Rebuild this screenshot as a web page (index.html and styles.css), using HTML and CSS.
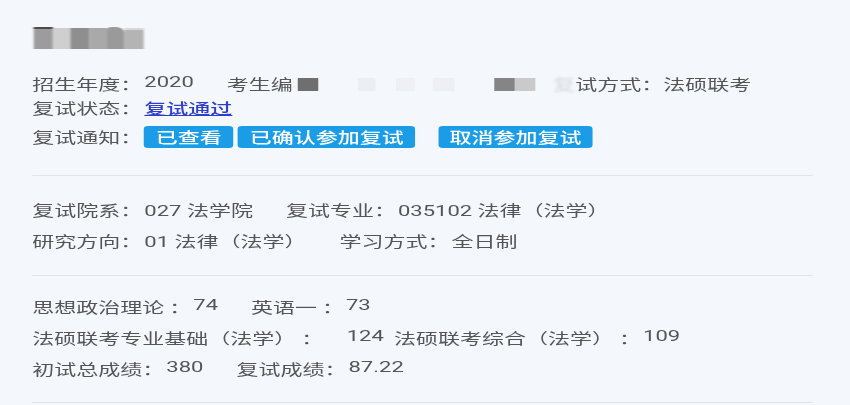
FILE: index.html
```html
<!DOCTYPE html>
<html lang="zh-CN">
<head>
<meta charset="utf-8">
<title>复试信息</title>
<link rel="stylesheet" href="styles.css">
</head>
<body>
<div class="page">
  <div class="name"><i class="nb n1"></i><i class="nb n2"></i><i class="nb n3"></i><i class="nb n4"></i><i class="nb n5"></i><i class="nb n6"></i></div>

  <section class="sec sec1">
    <div class="row r1"><span class="lbl">招生年度：</span><span class="num up">2020</span><span class="f">考生编</span><i class="blk k1"></i><i class="blk k2"></i><i class="blk k3"></i><i class="blk k4"></i><i class="blk k5"></i><i class="blk k6"></i><span class="f2"><span class="fade">复</span>试方式：法硕联考</span></div>
    <div class="row r2"><span class="lbl">复试状态：</span><a class="link" href="#">复试通过</a></div>
    <div class="row r3"><span class="lbl">复试通知：</span><span class="btn b-first">已查看</span><span class="btn b-second">已确认参加复试</span><span class="btn b-third">取消参加复试</span></div>
  </section>

  <section class="sec sec2">
    <div class="row"><span class="lbl">复试院系：</span><span class="val">027 法学院</span><span class="f">复试专业：</span><span class="val">035102 法律（法学）</span></div>
    <div class="row"><span class="lbl">研究方向：</span><span class="val">01 法律（法学）</span><span class="f">学习方式：</span><span class="val">全日制</span></div>
  </section>

  <section class="sec sec3">
    <div class="row"><span class="lbl">思想政治理论 ：</span><span class="num up">74</span><span class="f">英语一 ：</span><span class="num up">73</span></div>
    <div class="row"><span class="lbl">法硕联考专业基础（法学） ：</span><span class="num up wide">124</span><span class="f near">法硕联考综合（法学） ：</span><span class="num up">109</span></div>
    <div class="row"><span class="lbl">初试总成绩：</span><span class="num up">380</span><span class="f">复试成绩：</span><span class="num up">87.22</span></div>
  </section>
</div>
</body>
</html>
```

FILE: styles.css
```css
html, body {
  margin: 0;
  padding: 0;
  background: #f4f7fc;
}

body {
  width: 850px;
  height: 405px;
  overflow: hidden;
  font-family: "Noto Sans CJK SC", "Noto Sans", sans-serif;
  font-size: 15px;
  color: #555555;
}

/* the source screenshot is horizontally stretched */
.page {
  width: 531.5px;
  padding: 0 26px 0 22px;
  transform: scaleX(1.4667);
  transform-origin: 0 0;
  filter: blur(0.25px);
}

/* blurred name */
.name {
  display: flex;
  align-items: flex-end;
  height: 23px;
  margin-top: 26px;
  padding-left: 1px;
  filter: blur(0.7px);
}
.nb { display: block; height: 21px; }
.n1 { width: 12.5px; background: #9c9c9c; border-top: 2px solid #4a4a4a; height: 20px; }
.n2 { width: 12.5px; background: #cfcfcf; }
.n3 { width: 13px; background: #8e8e8e; }
.n4 { width: 12px; background: #a9a9a9; }
.n5 { width: 12px; background: #9a9a9a; height: 22px; border-radius: 3px 6px 0 0; }
.n6 { width: 13px; background: #b4b4b4; height: 19px; border-top: 2px solid #d8d8d8; }

.sec {
  border-bottom: 1px solid #e1e4ea;
}
.sec1 { padding-top: 20.5px; padding-bottom: 21.5px; }
.sec2 { padding-top: 17.5px; padding-bottom: 19.5px; }
.sec3 { padding-top: 13.5px; padding-bottom: 19.5px; }

.row {
  height: 31px;
  line-height: 31px;
  white-space: nowrap;
}
.r1, .r2 { height: 25px; line-height: 25px; }
.r3 {
  height: 34px;
  display: flex;
  align-items: center;
}

.num, .val {
  font-family: Roboto, "Noto Sans CJK SC", sans-serif;
  margin-left: 1.4px;
}
.up { vertical-align: 3px; }
.wide { margin-left: 16px; }

.f { margin-left: 22.5px; }
.near { margin-left: 7px; }

/* masked exam number */
.blk {
  display: inline-block;
  width: 13.6px;
  height: 13px;
  vertical-align: -1px;
  filter: blur(0.5px);
}
.k1 { margin-left: 3.4px; background: #6f6f6f; }
.k2 { margin-left: 27px; width: 12.3px; background: #eceef2; }
.k3 { margin-left: 13.6px; background: #eef0f4; }
.k4 { margin-left: 12.3px; width: 15px; background: #edeff3; }
.k5 { margin-left: 27px; background: #858585; }
.k6 { background: #cacaca; }
.f2 { margin-left: 12.5px; }
.fade { color: #d6d9df; filter: blur(1px); }

.link {
  color: #2f3ecc;
  text-decoration: underline;
  margin-left: 1.4px;
  font-weight: 500;
}

.btn {
  display: block;
  height: 22px;
  line-height: 22px;
  padding: 0 7.8px;
  background: #1a9de6;
  color: #ffffff;
  border-radius: 3px;
  font-weight: 500;
}
.b-first { margin-left: 1.4px; }
.b-second { margin-left: 3.4px; }
.b-third { margin-left: 15.7px; }
```
